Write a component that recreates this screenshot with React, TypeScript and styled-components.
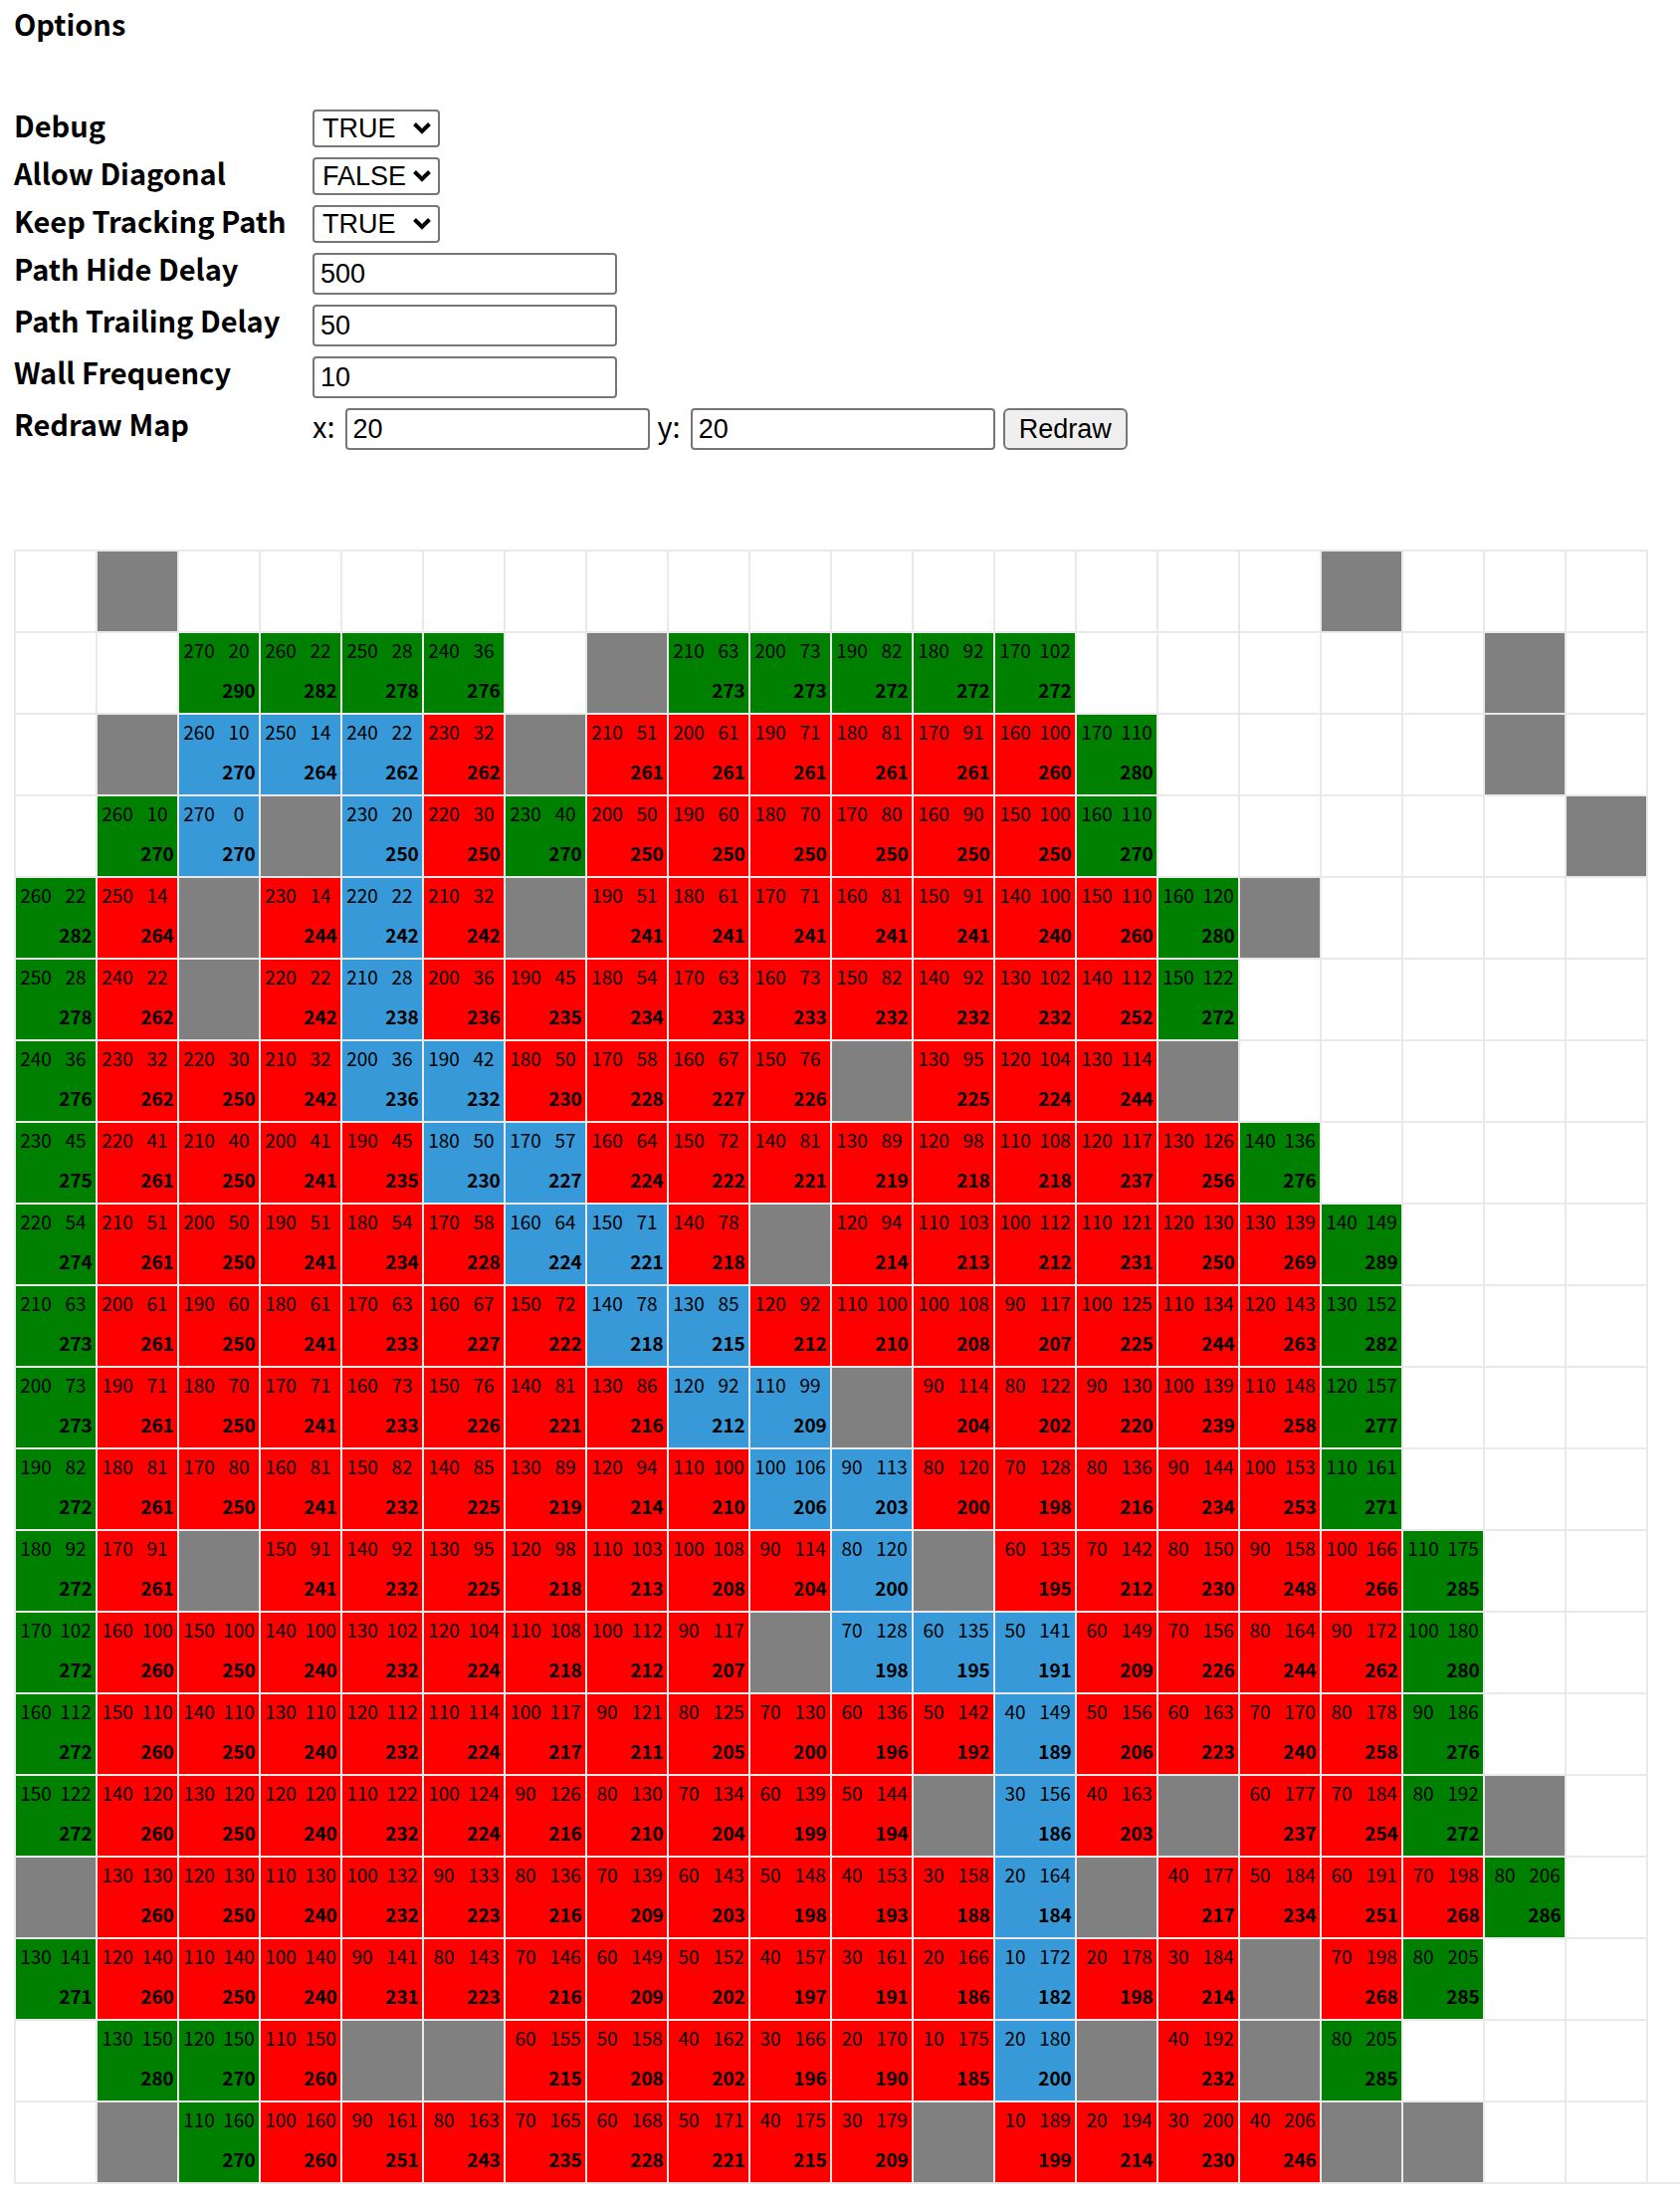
import React, { useId, useState } from 'react';
import styled, { createGlobalStyle } from 'styled-components';

const GlobalStyle = createGlobalStyle`
  body {
    margin: 0;
    background: #fff;
    color: #000;
    font-family: 'Noto Sans CJK KR', 'Noto Sans', sans-serif;
  }
`;

const controlFont = "'Liberation Sans', Arial, sans-serif";

const Page = styled.main`
  padding: 8px 0 24px 14px;
`;

const Title = styled.h1`
  margin: 0 0 72px;
  font-size: 29px;
  line-height: 30px;
  font-weight: 700;
`;

const Form = styled.form`
  display: grid;
  gap: 10px;
  margin-bottom: 100px;
`;

const Row = styled.div`
  display: grid;
  grid-template-columns: 300px 1fr;
  align-items: start;
`;

const Label = styled.label`
  font-size: 29px;
  line-height: 30px;
  font-weight: 700;
`;

const Legend = styled.span`
  font-size: 29px;
  line-height: 30px;
  font-weight: 700;
`;

const SelectBox = styled.div`
  position: relative;
  width: 128px;
  height: 38px;
`;

const Select = styled.select`
  appearance: none;
  box-sizing: border-box;
  width: 100%;
  height: 100%;
  margin: 0;
  padding: 0 0 0 8px;
  border: 2px solid #767676;
  border-radius: 4px;
  background: #fff;
  color: #000;
  font: 27px ${controlFont};
`;

const Chevron = styled.svg`
  position: absolute;
  right: 8px;
  top: 12px;
  width: 20px;
  height: 14px;
  pointer-events: none;
`;

const Input = styled.input`
  box-sizing: border-box;
  width: 306px;
  height: 42px;
  margin: 0;
  padding: 0 6px;
  border: 2px solid #767676;
  border-radius: 4px;
  background: #fff;
  color: #000;
  font: 27px ${controlFont};
`;

const Inline = styled.div`
  display: flex;
  align-items: flex-start;
  gap: 8px;
`;

const Axis = styled.label`
  display: flex;
  align-items: baseline;
  gap: 10px;
  font-size: 29px;
  line-height: 30px;
`;

const Button = styled.button`
  height: 42px;
  margin: 0;
  padding: 0 14px;
  border: 2px solid #767676;
  border-radius: 6px;
  background: #efefef;
  color: #000;
  font: 27px ${controlFont};
`;

const Board = styled.div`
  border-bottom: 2px solid #e9e9e9;
`;

const BoardRow = styled.div`
  display: flex;
  width: max-content;
  border-right: 2px solid #e9e9e9;
`;

type Kind = 'empty' | 'wall' | 'open' | 'closed' | 'path';

const fills: Record<Kind, string> = {
  empty: '#fff',
  wall: '#808080',
  open: '#008000',
  closed: '#f00',
  path: '#3799d7',
};

const Cell = styled.div<{ $kind: Kind }>`
  display: grid;
  grid-template-columns: 40px 40px;
  grid-template-rows: 40px 40px;
  justify-items: center;
  border: solid #e9e9e9;
  border-width: 2px 0 0 2px;
  background: ${(p) => fills[p.$kind]};
  font-size: 19px;
  line-height: 34px;
`;

const Total = styled.strong`
  grid-column: 2;
  font-weight: 700;
`;

// "." is free, "#" is a wall; o, c and p are open, closed and path nodes
// followed by their cost from the start and their distance to the goal.
const map = [
  '. # . . . . . . . . . . . . . . # . . .',
  '. . o270,20 o260,22 o250,28 o240,36 . # o210,63 o200,73 o190,82 o180,92 o170,102 . . . . . # .',
  '. # p260,10 p250,14 p240,22 c230,32 # c210,51 c200,61 c190,71 c180,81 c170,91 c160,100 o170,110 . . . . # .',
  '. o260,10 p270,0 # p230,20 c220,30 o230,40 c200,50 c190,60 c180,70 c170,80 c160,90 c150,100 o160,110 . . . . . #',
  'o260,22 c250,14 # c230,14 p220,22 c210,32 # c190,51 c180,61 c170,71 c160,81 c150,91 c140,100 c150,110 o160,120 # . . . .',
  'o250,28 c240,22 # c220,22 p210,28 c200,36 c190,45 c180,54 c170,63 c160,73 c150,82 c140,92 c130,102 c140,112 o150,122 . . . . .',
  'o240,36 c230,32 c220,30 c210,32 p200,36 p190,42 c180,50 c170,58 c160,67 c150,76 # c130,95 c120,104 c130,114 # . . . . .',
  'o230,45 c220,41 c210,40 c200,41 c190,45 p180,50 p170,57 c160,64 c150,72 c140,81 c130,89 c120,98 c110,108 c120,117 c130,126 o140,136 . . . .',
  'o220,54 c210,51 c200,50 c190,51 c180,54 c170,58 p160,64 p150,71 c140,78 # c120,94 c110,103 c100,112 c110,121 c120,130 c130,139 o140,149 . . .',
  'o210,63 c200,61 c190,60 c180,61 c170,63 c160,67 c150,72 p140,78 p130,85 c120,92 c110,100 c100,108 c90,117 c100,125 c110,134 c120,143 o130,152 . . .',
  'o200,73 c190,71 c180,70 c170,71 c160,73 c150,76 c140,81 c130,86 p120,92 p110,99 # c90,114 c80,122 c90,130 c100,139 c110,148 o120,157 . . .',
  'o190,82 c180,81 c170,80 c160,81 c150,82 c140,85 c130,89 c120,94 c110,100 p100,106 p90,113 c80,120 c70,128 c80,136 c90,144 c100,153 o110,161 . . .',
  'o180,92 c170,91 # c150,91 c140,92 c130,95 c120,98 c110,103 c100,108 c90,114 p80,120 # c60,135 c70,142 c80,150 c90,158 c100,166 o110,175 . .',
  'o170,102 c160,100 c150,100 c140,100 c130,102 c120,104 c110,108 c100,112 c90,117 # p70,128 p60,135 p50,141 c60,149 c70,156 c80,164 c90,172 o100,180 . .',
  'o160,112 c150,110 c140,110 c130,110 c120,112 c110,114 c100,117 c90,121 c80,125 c70,130 c60,136 c50,142 p40,149 c50,156 c60,163 c70,170 c80,178 o90,186 . .',
  'o150,122 c140,120 c130,120 c120,120 c110,122 c100,124 c90,126 c80,130 c70,134 c60,139 c50,144 # p30,156 c40,163 # c60,177 c70,184 o80,192 # .',
  '# c130,130 c120,130 c110,130 c100,132 c90,133 c80,136 c70,139 c60,143 c50,148 c40,153 c30,158 p20,164 # c40,177 c50,184 c60,191 c70,198 o80,206 .',
  'o130,141 c120,140 c110,140 c100,140 c90,141 c80,143 c70,146 c60,149 c50,152 c40,157 c30,161 c20,166 p10,172 c20,178 c30,184 # c70,198 o80,205 . .',
  '. o130,150 o120,150 c110,150 # # c60,155 c50,158 c40,162 c30,166 c20,170 c10,175 p20,180 # c40,192 # o80,205 . . .',
  '. # o110,160 c100,160 c90,161 c80,163 c70,165 c60,168 c50,171 c40,175 c30,179 # c10,189 c20,194 c30,200 c40,206 # # . .',
];

const kinds: Record<string, Kind> = {
  '.': 'empty',
  '#': 'wall',
  o: 'open',
  c: 'closed',
  p: 'path',
};

function MapCell({ token }: { token: string }) {
  const kind = kinds[token[0]];
  if (token.length === 1) return <Cell $kind={kind} />;
  const [cost, distance] = token.slice(1).split(',').map(Number);
  return (
    <Cell $kind={kind}>
      <span>{cost}</span>
      <span>{distance}</span>
      <Total>{cost + distance}</Total>
    </Cell>
  );
}

function SelectRow({ label, initial }: { label: string; initial: string }) {
  const id = useId();
  const [value, setValue] = useState(initial);
  return (
    <Row>
      <Label htmlFor={id}>{label}</Label>
      <SelectBox>
        <Select id={id} value={value} onChange={(e) => setValue(e.target.value)}>
          <option>TRUE</option>
          <option>FALSE</option>
        </Select>
        <Chevron viewBox="0 0 20 14" aria-hidden="true">
          <path d="M2.5 2.5 L10 10 L17.5 2.5" fill="none" stroke="#000" strokeWidth="4" />
        </Chevron>
      </SelectBox>
    </Row>
  );
}

function InputRow({ label, initial }: { label: string; initial: string }) {
  const id = useId();
  return (
    <Row>
      <Label htmlFor={id}>{label}</Label>
      <Input id={id} type="text" defaultValue={initial} />
    </Row>
  );
}

export default function App() {
  return (
    <>
      <GlobalStyle />
      <Page>
        <Title>Options</Title>
        <Form onSubmit={(e) => e.preventDefault()}>
          <SelectRow label="Debug" initial="TRUE" />
          <SelectRow label="Allow Diagonal" initial="FALSE" />
          <SelectRow label="Keep Tracking Path" initial="TRUE" />
          <InputRow label="Path Hide Delay" initial="500" />
          <InputRow label="Path Trailing Delay" initial="50" />
          <InputRow label="Wall Frequency" initial="10" />
          <Row>
            <Legend>Redraw Map</Legend>
            <Inline>
              <Axis>
                x: <Input type="text" defaultValue="20" />
              </Axis>
              <Axis>
                y: <Input type="text" defaultValue="20" />
              </Axis>
              <Button type="submit">Redraw</Button>
            </Inline>
          </Row>
        </Form>
        <Board>
          {map.map((line, y) => (
            <BoardRow key={y}>
              {line.split(' ').map((token, x) => (
                <MapCell key={x} token={token} />
              ))}
            </BoardRow>
          ))}
        </Board>
      </Page>
    </>
  );
}
